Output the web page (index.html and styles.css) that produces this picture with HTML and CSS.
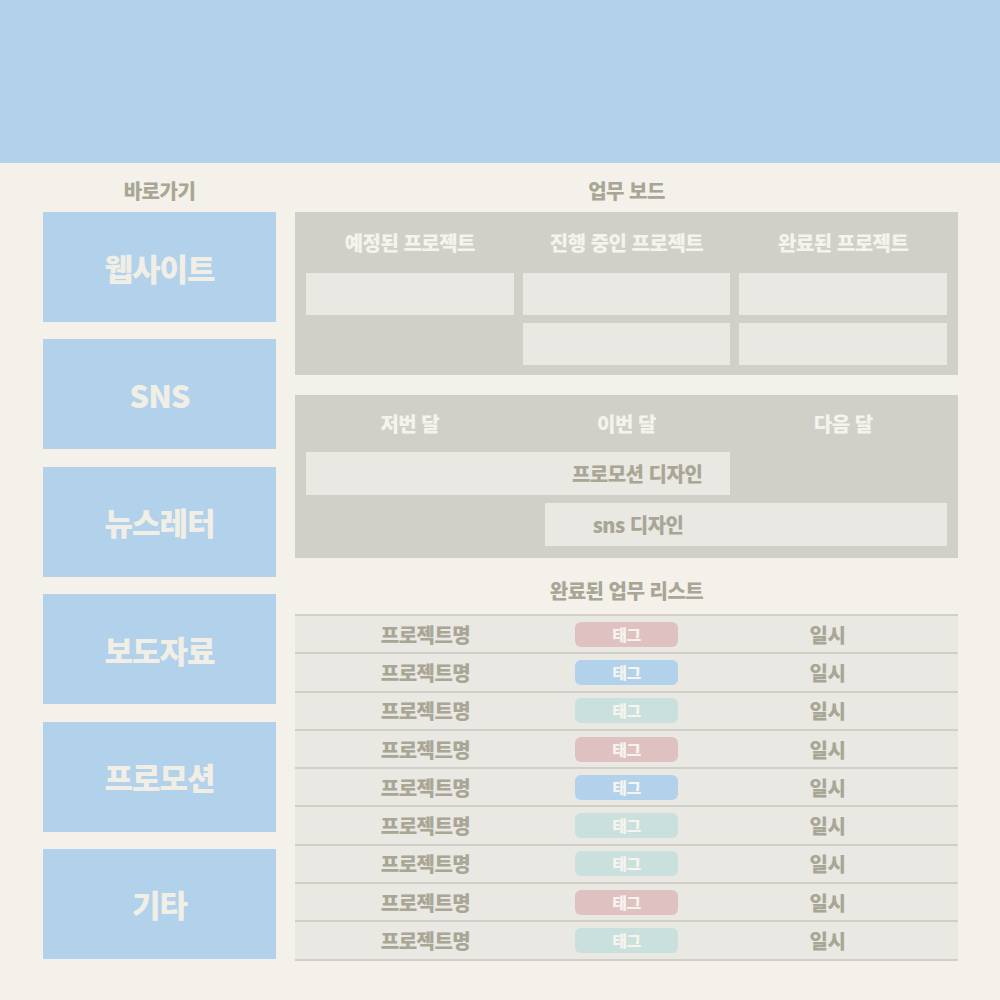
FILE: index.html
```html
<!DOCTYPE html>
<html lang="ko">
<head>
  <meta charset="UTF-8" />
  <meta name="viewport" content="width=device-width, initial-scale=1.0" />
  <title>업무 보드</title>
  <link rel="stylesheet" href="styles.css">
</head>
<body>
  <header class="top-bar"></header>

  <main class="layout">
    <!-- 바로가기 -->
    <section class="shortcuts">
      <h2 class="section-title">바로가기</h2>
      <div class="shortcut-list">
        <a class="shortcut" href="#">웹사이트</a>
        <a class="shortcut" href="#">SNS</a>
        <a class="shortcut" href="#">뉴스레터</a>
        <a class="shortcut" href="#">보도자료</a>
        <a class="shortcut" href="#">프로모션</a>
        <a class="shortcut" href="#">기타</a>
      </div>
    </section>

    <!-- 업무 보드 -->
    <section class="work">
      <h2 class="section-title">업무 보드</h2>

      <div class="board board-status">
        <div class="board-col">
          <h3 class="board-head">예정된 프로젝트</h3>
          <div class="board-cell"></div>
        </div>
        <div class="board-col">
          <h3 class="board-head">진행 중인 프로젝트</h3>
          <div class="board-cell"></div>
          <div class="board-cell"></div>
        </div>
        <div class="board-col">
          <h3 class="board-head">완료된 프로젝트</h3>
          <div class="board-cell"></div>
          <div class="board-cell"></div>
        </div>
      </div>

      <div class="board board-timeline">
        <h3 class="board-head">저번 달</h3>
        <h3 class="board-head">이번 달</h3>
        <h3 class="board-head">다음 달</h3>
        <div class="timeline-bar bar-promo">프로모션 디자인</div>
        <div class="timeline-bar bar-sns">sns 디자인</div>
      </div>

      <h2 class="section-title list-title">완료된 업무 리스트</h2>
      <div class="done-list">
        <div class="done-row"><span>프로젝트명</span><span class="tag tag-red">태그</span><span>일시</span></div>
        <div class="done-row"><span>프로젝트명</span><span class="tag tag-blue">태그</span><span>일시</span></div>
        <div class="done-row"><span>프로젝트명</span><span class="tag tag-mint">태그</span><span>일시</span></div>
        <div class="done-row"><span>프로젝트명</span><span class="tag tag-red">태그</span><span>일시</span></div>
        <div class="done-row"><span>프로젝트명</span><span class="tag tag-blue">태그</span><span>일시</span></div>
        <div class="done-row"><span>프로젝트명</span><span class="tag tag-mint">태그</span><span>일시</span></div>
        <div class="done-row"><span>프로젝트명</span><span class="tag tag-mint">태그</span><span>일시</span></div>
        <div class="done-row"><span>프로젝트명</span><span class="tag tag-red">태그</span><span>일시</span></div>
        <div class="done-row"><span>프로젝트명</span><span class="tag tag-mint">태그</span><span>일시</span></div>
      </div>
    </section>
  </main>
</body>
</html>
```

FILE: styles.css
```css
body {
  font-family: "Noto Sans CJK KR", "Noto Sans", sans-serif;
  font-weight: 900;
  margin: 0;
  padding: 0;
  background: #f4f1ea;
  color: #a9a696;
}

h2, h3 {
  margin: 0;
  font-weight: 900;
}

.top-bar {
  height: 163px;
  background: #b2d1ea;
}

.layout {
  display: flex;
  gap: 19px;
  padding-left: 43px;
}

.section-title {
  font-size: 20px;
  line-height: 43px;
  padding-top: 6px;
  text-align: center;
  color: #a9a696;
  letter-spacing: -0.5px;
}

/* 바로가기 */
.shortcuts {
  width: 233px;
}

.shortcut-list {
  display: flex;
  flex-direction: column;
  gap: 17.4px;
}

.shortcut {
  display: flex;
  align-items: center;
  justify-content: center;
  height: 110px;
  background: #b2d1ea;
  color: #f1eee6;
  font-size: 31px;
  letter-spacing: -1px;
  text-decoration: none;
}

/* 업무 보드 */
.work {
  width: 663px;
}

.board {
  background: #d1d0c8;
  display: grid;
  grid-template-columns: repeat(3, 1fr);
  column-gap: 9px;
  padding: 0 11px 10px;
}

.board-head {
  font-size: 20px;
  text-align: center;
  color: #f4f3ee;
  letter-spacing: -0.5px;
}

.board-status .board-head {
  line-height: 61px;
  margin-bottom: -8px;
}

.board-col {
  display: flex;
  flex-direction: column;
  gap: 8px;
}

.board-cell {
  height: 42px;
  background: #e9e8e3;
}

.board-timeline {
  margin-top: 20px;
  row-gap: 8px;
  padding-bottom: 12px;
}

.board-timeline .board-head {
  line-height: 57px;
  margin-bottom: -8px;
}

.timeline-bar {
  height: 43px;
  background: #e9e8e3;
  display: flex;
  align-items: center;
  font-size: 20px;
  color: #a9a696;
  letter-spacing: -0.5px;
}

.bar-promo {
  grid-column: 1 / 3;
  justify-content: flex-end;
  padding-right: 28px;
}

.bar-sns {
  grid-column: 2 / 4;
  margin-left: 22px;
  padding-left: 48px;
}

/* 완료된 업무 리스트 */
.list-title {
  padding-top: 9px;
  line-height: 47px;
}

.done-list {
  border-top: 2px solid #d1d0c8;
}

.done-row {
  display: grid;
  grid-template-columns: repeat(3, 1fr);
  align-items: center;
  justify-items: center;
  box-sizing: border-box;
  height: 38.3px;
  padding: 0 30px;
  background: #e9e8e3;
  border-bottom: 2px solid #d1d0c8;
  font-size: 20px;
  letter-spacing: -0.5px;
}

.tag {
  width: 103px;
  height: 25px;
  line-height: 25px;
  border-radius: 6px;
  text-align: center;
  font-size: 16px;
  color: #f6f4ef;
}

.tag-red {
  background: #e0c1c1;
}

.tag-blue {
  background: #b2d1ea;
}

.tag-mint {
  background: #c9e0dc;
}
```
